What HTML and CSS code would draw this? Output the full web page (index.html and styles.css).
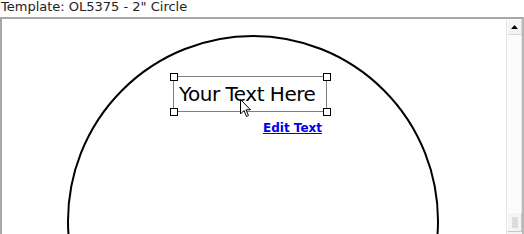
FILE: index.html
```html
<!DOCTYPE html>
<html lang="en">
<head>
  <meta charset="UTF-8">
  <title>Template Preview</title>
  <link rel="stylesheet" href="styles.css">
</head>
<body>
  <div class="template-title">Template: OL5375 - 2" Circle</div>

  <div class="frame">
    <!-- Label canvas -->
    <div class="canvas">
      <svg class="label-shape" width="504" height="240" viewBox="0 0 504 240">
        <circle cx="251" cy="202" r="185" fill="none" stroke="#000" stroke-width="2"/>
      </svg>

      <div class="text-box">
        <span class="handle tl"></span>
        <span class="handle tr"></span>
        <span class="handle bl"></span>
        <span class="handle br"></span>
        <span class="text-value">Your Text Here</span>
      </div>

      <a class="edit-link" href="#">Edit Text</a>

      <svg class="cursor" width="12" height="19" viewBox="0 0 12 19">
        <path d="M0.5 0.5 L0.5 15 L4 11.5 L6.5 17.5 L8.5 16.5 L6 10.8 L10.5 10.8 Z" fill="#fff" stroke="#000" stroke-width="1"/>
      </svg>
    </div>

    <!-- Scrollbar -->
    <div class="scrollbar">
      <div class="scroll-btn">
        <svg width="7" height="4" viewBox="0 0 7 4"><path d="M0 4 L3.5 0 L7 4 Z" fill="#000"/></svg>
      </div>
      <div class="scroll-track"></div>
      <div class="scroll-thumb"><span></span></div>
    </div>
  </div>
</body>
</html>
```

FILE: styles.css
```css
* {
  box-sizing: border-box;
  margin: 0;
  padding: 0;
}

body {
  font-family: "DejaVu Sans", Verdana, sans-serif;
  background-color: #fff;
  width: 524px;
  height: 234px;
  overflow: hidden;
}

.template-title {
  font-size: 13px;
  color: #222;
  height: 17px;
  line-height: 14px;
  padding-left: 1px;
  white-space: nowrap;
}

.frame {
  display: flex;
  width: 524px;
  height: 217px;
  border-top: 2px solid #a7a7a7;
  border-left: 2px solid #a7a7a7;
  border-right: 2px solid #b8b8b8;
  background-color: #fff;
}

.canvas {
  position: relative;
  flex: 1;
  overflow: hidden;
}

.label-shape {
  position: absolute;
  left: 0;
  top: 0;
}

.text-box {
  position: absolute;
  left: 171px;
  top: 57px;
  width: 154px;
  height: 36px;
  border: 1px solid #808080;
  display: flex;
  align-items: center;
  padding-left: 5px;
}

.text-value {
  font-size: 20px;
  color: #000;
  white-space: nowrap;
  letter-spacing: -0.5px;
}

.handle {
  position: absolute;
  width: 8px;
  height: 8px;
  border: 1px solid #000;
  background-color: #fff;
}

.handle.tl { left: -4px; top: -4px; }
.handle.tr { right: -5px; top: -4px; }
.handle.bl { left: -4px; bottom: -5px; }
.handle.br { right: -5px; bottom: -5px; }

.edit-link {
  position: absolute;
  left: 261px;
  top: 102px;
  font-size: 12px;
  font-weight: bold;
  color: #0000ee;
  text-decoration: underline;
}

.cursor {
  position: absolute;
  left: 238px;
  top: 80px;
}

.scrollbar {
  width: 16px;
  display: flex;
  flex-direction: column;
  background-color: #f4f4f4;
  border-left: 1px solid #e4e4e4;
}

.scroll-btn {
  height: 16px;
  display: flex;
  align-items: center;
  justify-content: center;
  background-color: #f4f4f4;
  border: 1px solid #d8d8d8;
  border-top-color: #fff;
  border-left-color: #fff;
}

.scroll-track {
  flex: 1;
  background-color: #fbfbfb;
  border-right: 1px solid #e8e8e8;
}

.scroll-thumb {
  height: 20px;
  margin-bottom: 2px;
  display: flex;
  align-items: center;
  justify-content: center;
  background-color: #f4f4f4;
  border: 1px solid #c8c8c8;
  border-top-color: #fff;
  border-left-color: #fff;
}

.scroll-thumb span {
  width: 6px;
  height: 11px;
  background-color: #dcdcdc;
}
```
